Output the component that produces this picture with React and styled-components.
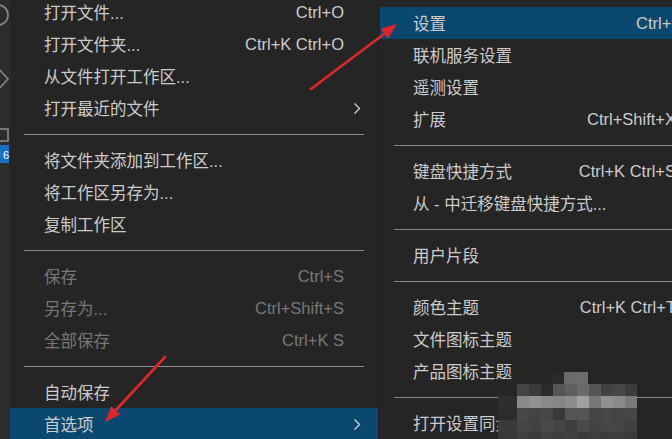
import React from 'react';
import styled, { createGlobalStyle } from 'styled-components';

const GlobalStyle = createGlobalStyle`
  html, body {
    margin: 0;
    padding: 0;
    background: #232323;
    overflow: hidden;
  }
`

const Page = styled.div`
    position: relative;
    width: 672px;
    height: 439px;
    display: flex;
    overflow: hidden;
    background: #232323;
    font-family: "Liberation Sans", "Noto Sans CJK SC", sans-serif;
    font-size: 16.5px;
    color: #cccccc;
`

const ActivityBar = styled.div`
    width: 10px;
    flex-shrink: 0;
    background: #2c2c2c;
`

const Menu = styled.div`
    width: ${p => p.width}px;
    flex-shrink: 0;
    margin-left: ${p => p.gap || 0}px;
    padding-top: ${p => p.top}px;
    background: #252526;
    display: flex;
    flex-direction: column;
`

const Item = styled.div`
    height: 32px;
    flex-shrink: 0;
    display: flex;
    align-items: center;
    padding: 0 17px 0 ${p => p.indent}px;
    background: ${p => (p.active ? '#0b4870' : 'transparent')};
    color: ${p => (p.disabled ? '#787878' : '#cccccc')};
    white-space: nowrap;
`

const Label = styled.span`
    flex: 1;
`

const Key = styled.span`
    margin-right: 17px;
`

const Sep = styled.div`
    height: 20px;
    flex-shrink: 0;
    display: flex;
    align-items: center;
    padding: 0 14px;
    &::after {
        content: '';
        flex: 1;
        height: 1px;
        background: #8a8a8a;
    }
`

const Overlay = styled.svg`
    position: absolute;
    left: 0;
    top: 0;
    pointer-events: none;
`

const fileItems = [
    { label: '打开文件...', key: 'Ctrl+O' },
    { label: '打开文件夹...', key: 'Ctrl+K Ctrl+O' },
    { label: '从文件打开工作区...' },
    { label: '打开最近的文件', sub: true },
    'sep',
    { label: '将文件夹添加到工作区...' },
    { label: '将工作区另存为...' },
    { label: '复制工作区' },
    'sep',
    { label: '保存', key: 'Ctrl+S', disabled: true },
    { label: '另存为...', key: 'Ctrl+Shift+S', disabled: true },
    { label: '全部保存', key: 'Ctrl+K S', disabled: true },
    'sep',
    { label: '自动保存' },
    { label: '首选项', sub: true, active: true },
]

const prefItems = [
    { label: '设置', key: 'Ctrl+,', active: true },
    { label: '联机服务设置' },
    { label: '遥测设置' },
    { label: '扩展', key: 'Ctrl+Shift+X' },
    'sep',
    { label: '键盘快捷方式', key: 'Ctrl+K Ctrl+S' },
    { label: '从 - 中迁移键盘快捷方式...' },
    'sep',
    { label: '用户片段' },
    'sep',
    { label: '颜色主题', key: 'Ctrl+K Ctrl+T' },
    { label: '文件图标主题' },
    { label: '产品图标主题' },
    'sep',
    { label: '打开设置同步' },
]

function Chevron() {
    return (
        <svg width="8" height="13" viewBox="0 0 8 13">
            <polyline points="1.5,1.5 6.5,6.5 1.5,11.5" fill="none" stroke="#cccccc" strokeWidth="1.4" />
        </svg>
    );
}

function MenuList({ items, indent }) {
    return items.map((it, i) =>
        it === 'sep' ? (
            <Sep key={i} />
        ) : (
            <Item key={i} indent={indent} active={it.active} disabled={it.disabled}>
                <Label>{it.label}</Label>
                {it.key && <Key>{it.key}</Key>}
                {it.sub && <Chevron />}
            </Item>
        )
    );
}

const mosaic = [
    [372, [[552, '#2a2a2a'], [564, '#6a6a6a'], [576, '#6c6c6c']]],
    [384, [[517, '#454545'], [529, '#3a3a3a'], [541, '#2b2b2b'], [553, '#555555'], [565, '#5f5f5f'], [577, '#6a6a6a'], [589, '#555555'], [601, '#424242'], [613, '#474747'], [625, '#3c3c3c']]],
    [396, [[498, '#2e2e2e'], [517, '#8a8a8a'], [529, '#919191'], [541, '#8a8a8a'], [553, '#868686'], [565, '#8c8c8c'], [577, '#a0a0a0'], [589, '#777777'], [601, '#909090'], [613, '#8a8a8a'], [625, '#7a7a7a']]],
    [408, [[498, '#2c2c2c'], [517, '#484848'], [529, '#444444'], [541, '#474747'], [553, '#3a3a3a'], [565, '#555555'], [577, '#565656'], [589, '#454545'], [601, '#474747'], [613, '#444444'], [625, '#464646']]],
    [420, [[498, '#3a3a3a'], [517, '#454545'], [529, '#424242'], [541, '#4a4a4a'], [553, '#444444'], [565, '#3e3e3e'], [577, '#4a4a4a'], [589, '#434343'], [601, '#474747'], [613, '#454545'], [625, '#404040']]],
    [432, [[498, '#383838'], [517, '#3f3f3f'], [529, '#3c3c3c'], [541, '#424242'], [553, '#3d3d3d'], [565, '#414141'], [577, '#3b3b3b'], [589, '#3f3f3f'], [601, '#3c3c3c'], [613, '#3e3e3e'], [625, '#3a3a3a']]],
]

function App() {
    return (
        <Page>
            <GlobalStyle />
            <ActivityBar>
                <svg width="10" height="170" viewBox="0 0 10 170">
                    <circle cx="-2" cy="15" r="10" fill="none" stroke="#8a8a8a" strokeWidth="1.6" />
                    <polyline points="-4,66 8,79 -4,92" fill="none" stroke="#8a8a8a" strokeWidth="1.6" />
                    <rect x="-8" y="129" width="16" height="12" fill="none" stroke="#8a8a8a" strokeWidth="1.6" />
                    <rect x="0" y="145" width="9" height="18" fill="#1a6fc4" />
                    <text x="3" y="159" fontSize="11" fill="#ffffff" fontFamily="Liberation Sans, sans-serif">6</text>
                </svg>
            </ActivityBar>

            <Menu width={368} top={0} style={{ marginTop: -4 }}>
                <MenuList items={fileItems} indent={34} />
            </Menu>

            <Menu width={330} gap={2} top={7}>
                <MenuList items={prefItems} indent={33} />
            </Menu>

            <Overlay width="672" height="439" viewBox="0 0 672 439">
                {mosaic.map(([y, cells]) =>
                    cells.map(([x, c], j) => {
                        const next = cells[j + 1] ? cells[j + 1][0] : (y === 372 ? 588 : 637);
                        return <rect key={y + '-' + x} x={x} y={y} width={next - x} height="12" fill={c} />;
                    })
                )}
                <line x1="311" y1="89" x2="384" y2="34" stroke="#e0262a" strokeWidth="2.6" strokeLinecap="round" />
                <polygon points="397,24 388,38.4 380.6,28.8" fill="#e0262a" />
                <line x1="165" y1="357" x2="116" y2="410" stroke="#e0262a" strokeWidth="2.6" strokeLinecap="round" />
                <polygon points="105,422 120.2,414.4 111.4,406.2" fill="#e0262a" />
            </Overlay>
        </Page>
    );
}

export default App;
